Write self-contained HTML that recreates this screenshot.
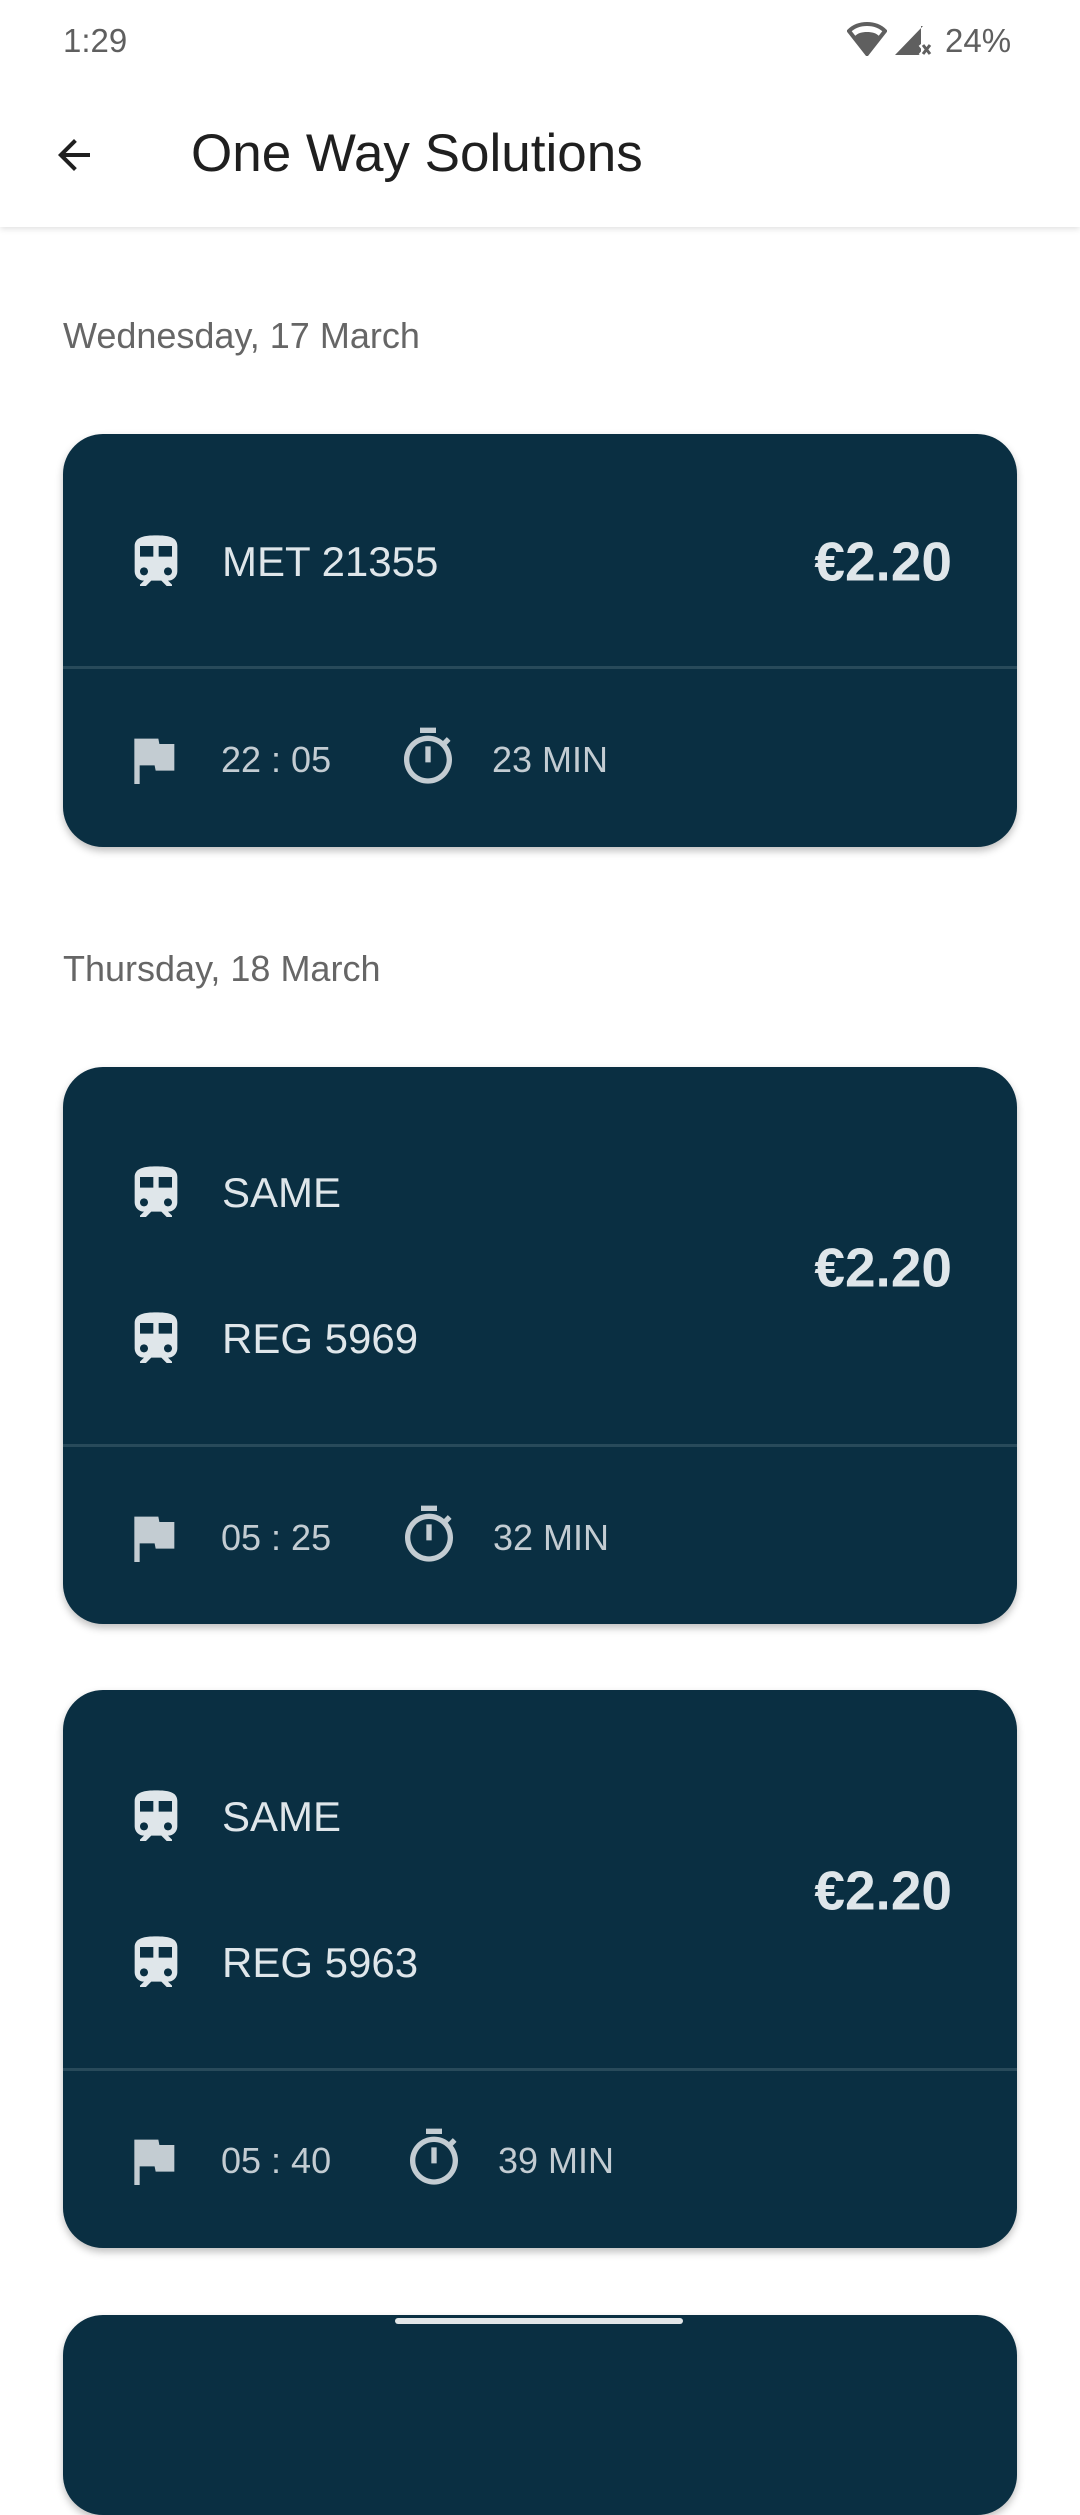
<!DOCTYPE html>
<html><head><meta charset="utf-8"><style>
*{margin:0;padding:0;box-sizing:border-box}
body{width:1080px;height:2340px;background:#fff;position:relative;overflow:hidden;font-family:"Liberation Sans",sans-serif}
.a{position:absolute;white-space:nowrap}
.st{color:#5f5f5f;font-size:33px}
.bar{position:absolute;left:0;top:0;width:1080px;height:227px;background:#fff;box-shadow:0 2px 6px rgba(0,0,0,.12)}
.date{color:#666;font-size:36px;left:63px}
.card{position:absolute;left:63px;width:954px;background:#0a2f42;border-radius:40px;box-shadow:0 4px 8px rgba(0,0,0,.25)}
.div{position:absolute;left:0;right:0;height:3px;background:#284a5a}
.t{position:absolute;color:#dfe6ea;font-size:42px;line-height:1;transform:translateY(-50%);white-space:nowrap}
.s{position:absolute;color:#c3ccd2;font-size:36px;line-height:1;transform:translateY(-50%);white-space:nowrap}
.p{position:absolute;right:65px;color:#dfe6ea;font-size:55px;font-weight:bold;line-height:1;transform:translateY(-50%)}
svg.i{position:absolute;width:64px;height:64px;transform:translateY(-50%)}
</style></head><body>
<div class="bar"></div>
<div class="a st" style="left:63px;top:22px">1:29</div>
<svg class="a" style="left:847px;top:22px" width="40" height="34" viewBox="0 0 40 34"><path d="M20 2C12 2 6 5 2 9l18 23L38 9C34 5 28 2 20 2z" fill="none" stroke="#5f5f5f" stroke-width="4"/><path d="M8 14l12 17 12-17c-3-3-7-4-12-4s-9 1-12 4z" fill="#5f5f5f"/></svg>
<svg class="a" style="left:893px;top:24px" width="40" height="34" viewBox="0 0 40 34"><path d="M30 2L2 31h26V2z" fill="#5f5f5f"/><path d="M28 20l10 12M38 20L28 32" stroke="#fff" stroke-width="6"/><path d="M30 21l7 9M37 21l-7 9" stroke="#5f5f5f" stroke-width="3"/></svg>
<div class="a st" style="left:945px;top:22px">24%</div>
<svg class="a" style="left:50px;top:131px" width="48" height="48" viewBox="0 0 24 24"><path d="M20 11H7.83l5.59-5.59L12 4l-8 8 8 8 1.41-1.41L7.83 13H20v-2z" fill="#1f1f1f"/></svg>
<div class="a" style="left:191px;top:123px;font-size:53px;color:#1f1f1f">One Way Solutions</div>
<div class="a date" style="top:315px">Wednesday, 17 March</div>
<div class="a date" style="top:948px">Thursday, 18 March</div>

<div class="card" style="top:434px;height:413px">
 <svg class="i" style="left:61px;top:128px" viewBox="0 0 24 24"><path fill="#dfe6ea" d="M12 2c-4 0-8 .5-8 4v9.5C4 17.43 5.57 19 7.5 19L6 20.5v.5h2.23l2-2H14l2 2h2v-.5L16.5 19c1.93 0 3.5-1.57 3.5-3.5V6c0-3.5-3.58-4-8-4zM7.5 17c-.83 0-1.5-.67-1.5-1.5S6.67 14 7.5 14s1.5.67 1.5 1.5S8.33 17 7.5 17zm3.5-7H6V6h5v4zm2 0V6h5v4h-5zm3.5 7c-.83 0-1.5-.67-1.5-1.5s.67-1.5 1.5-1.5 1.5.67 1.5 1.5-.67 1.5-1.5 1.5z"/></svg>
 <div class="t" style="left:159px;top:128px">MET 21355</div>
 <div class="p" style="top:128px">€2.20</div>
 <div class="div" style="top:232px"></div>
 <svg class="i" style="left:58px;top:326px" viewBox="0 0 24 24"><path fill="#c3ccd2" d="M14.4 6L14 4H5v17h2v-7h5.6l.4 2h7V6z"/></svg>
 <div class="s" style="left:158px;top:326px">22 : 05</div>
 <svg class="i" style="left:333px;top:323px" viewBox="0 0 24 24"><path fill="#c3ccd2" d="M15 1H9v2h6V1zm-4 13h2V8h-2v6zm8.03-6.61l1.42-1.42c-.43-.51-.9-.99-1.41-1.41l-1.42 1.42C16.07 4.74 14.12 4 12 4c-4.97 0-9 4.03-9 9s4.02 9 9 9 9-4.03 9-9c0-2.12-.74-4.07-1.97-5.61zM12 20c-3.87 0-7-3.13-7-7s3.13-7 7-7 7 3.13 7 7-3.13 7-7 7z"/></svg>
 <div class="s" style="left:429px;top:326px">23 MIN</div>
</div>

<div class="card" style="top:1067px;height:557px">
 <svg class="i" style="left:61px;top:126px" viewBox="0 0 24 24"><path fill="#dfe6ea" d="M12 2c-4 0-8 .5-8 4v9.5C4 17.43 5.57 19 7.5 19L6 20.5v.5h2.23l2-2H14l2 2h2v-.5L16.5 19c1.93 0 3.5-1.57 3.5-3.5V6c0-3.5-3.58-4-8-4zM7.5 17c-.83 0-1.5-.67-1.5-1.5S6.67 14 7.5 14s1.5.67 1.5 1.5S8.33 17 7.5 17zm3.5-7H6V6h5v4zm2 0V6h5v4h-5zm3.5 7c-.83 0-1.5-.67-1.5-1.5s.67-1.5 1.5-1.5 1.5.67 1.5 1.5-.67 1.5-1.5 1.5z"/></svg>
 <div class="t" style="left:159px;top:126px">SAME</div>
 <svg class="i" style="left:61px;top:272px" viewBox="0 0 24 24"><path fill="#dfe6ea" d="M12 2c-4 0-8 .5-8 4v9.5C4 17.43 5.57 19 7.5 19L6 20.5v.5h2.23l2-2H14l2 2h2v-.5L16.5 19c1.93 0 3.5-1.57 3.5-3.5V6c0-3.5-3.58-4-8-4zM7.5 17c-.83 0-1.5-.67-1.5-1.5S6.67 14 7.5 14s1.5.67 1.5 1.5S8.33 17 7.5 17zm3.5-7H6V6h5v4zm2 0V6h5v4h-5zm3.5 7c-.83 0-1.5-.67-1.5-1.5s.67-1.5 1.5-1.5 1.5.67 1.5 1.5-.67 1.5-1.5 1.5z"/></svg>
 <div class="t" style="left:159px;top:272px">REG 5969</div>
 <div class="p" style="top:201px">€2.20</div>
 <div class="div" style="top:377px"></div>
 <svg class="i" style="left:58px;top:471px" viewBox="0 0 24 24"><path fill="#c3ccd2" d="M14.4 6L14 4H5v17h2v-7h5.6l.4 2h7V6z"/></svg>
 <div class="s" style="left:158px;top:471px">05 : 25</div>
 <svg class="i" style="left:334px;top:468px" viewBox="0 0 24 24"><path fill="#c3ccd2" d="M15 1H9v2h6V1zm-4 13h2V8h-2v6zm8.03-6.61l1.42-1.42c-.43-.51-.9-.99-1.41-1.41l-1.42 1.42C16.07 4.74 14.12 4 12 4c-4.97 0-9 4.03-9 9s4.02 9 9 9 9-4.03 9-9c0-2.12-.74-4.07-1.97-5.61zM12 20c-3.87 0-7-3.13-7-7s3.13-7 7-7 7 3.13 7 7-3.13 7-7 7z"/></svg>
 <div class="s" style="left:430px;top:471px">32 MIN</div>
</div>

<div class="card" style="top:1690px;height:558px">
 <svg class="i" style="left:61px;top:127px" viewBox="0 0 24 24"><path fill="#dfe6ea" d="M12 2c-4 0-8 .5-8 4v9.5C4 17.43 5.57 19 7.5 19L6 20.5v.5h2.23l2-2H14l2 2h2v-.5L16.5 19c1.93 0 3.5-1.57 3.5-3.5V6c0-3.5-3.58-4-8-4zM7.5 17c-.83 0-1.5-.67-1.5-1.5S6.67 14 7.5 14s1.5.67 1.5 1.5S8.33 17 7.5 17zm3.5-7H6V6h5v4zm2 0V6h5v4h-5zm3.5 7c-.83 0-1.5-.67-1.5-1.5s.67-1.5 1.5-1.5 1.5.67 1.5 1.5-.67 1.5-1.5 1.5z"/></svg>
 <div class="t" style="left:159px;top:127px">SAME</div>
 <svg class="i" style="left:61px;top:273px" viewBox="0 0 24 24"><path fill="#dfe6ea" d="M12 2c-4 0-8 .5-8 4v9.5C4 17.43 5.57 19 7.5 19L6 20.5v.5h2.23l2-2H14l2 2h2v-.5L16.5 19c1.93 0 3.5-1.57 3.5-3.5V6c0-3.5-3.58-4-8-4zM7.5 17c-.83 0-1.5-.67-1.5-1.5S6.67 14 7.5 14s1.5.67 1.5 1.5S8.33 17 7.5 17zm3.5-7H6V6h5v4zm2 0V6h5v4h-5zm3.5 7c-.83 0-1.5-.67-1.5-1.5s.67-1.5 1.5-1.5 1.5.67 1.5 1.5-.67 1.5-1.5 1.5z"/></svg>
 <div class="t" style="left:159px;top:273px">REG 5963</div>
 <div class="p" style="top:201px">€2.20</div>
 <div class="div" style="top:378px"></div>
 <svg class="i" style="left:58px;top:471px" viewBox="0 0 24 24"><path fill="#c3ccd2" d="M14.4 6L14 4H5v17h2v-7h5.6l.4 2h7V6z"/></svg>
 <div class="s" style="left:158px;top:471px">05 : 40</div>
 <svg class="i" style="left:339px;top:468px" viewBox="0 0 24 24"><path fill="#c3ccd2" d="M15 1H9v2h6V1zm-4 13h2V8h-2v6zm8.03-6.61l1.42-1.42c-.43-.51-.9-.99-1.41-1.41l-1.42 1.42C16.07 4.74 14.12 4 12 4c-4.97 0-9 4.03-9 9s4.02 9 9 9 9-4.03 9-9c0-2.12-.74-4.07-1.97-5.61zM12 20c-3.87 0-7-3.13-7-7s3.13-7 7-7 7 3.13 7 7-3.13 7-7 7z"/></svg>
 <div class="s" style="left:435px;top:471px">39 MIN</div>
</div>

<div class="card" style="top:2315px;height:200px"></div>
<div class="a" style="left:395px;top:2318px;width:288px;height:6px;border-radius:3px;background:#e2e6e8"></div>
</body></html>
